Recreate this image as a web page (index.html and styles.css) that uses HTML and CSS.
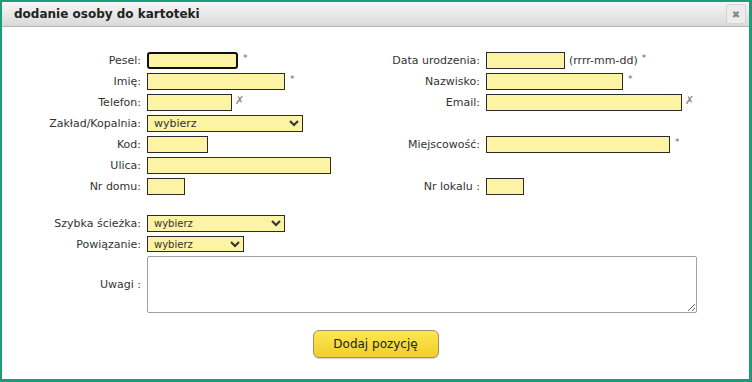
FILE: index.html
```html
<!DOCTYPE html>
<html lang="pl">
<head>
    <meta charset="UTF-8">
    <title>dodanie osoby do kartoteki</title>
    <link rel="stylesheet" href="styles.css">
</head>
<body>
    <div class="frame">
        <div class="dialog">
            <div class="titlebar">
                <span class="title">dodanie osoby do kartoteki</span>
                <span class="close">&#x2716;</span>
            </div>

            <form class="form">
                <div class="grid">
                    <label>Pesel:</label>
                    <div class="field"><input type="text" class="w90 focused"><span class="req">*</span></div>
                    <label>Data urodzenia:</label>
                    <div class="field"><input type="text" class="w79"><span class="hint">(rrrr-mm-dd)</span><span class="req">*</span></div>

                    <label>Imię:</label>
                    <div class="field"><input type="text" class="w138"><span class="req">*</span></div>
                    <label>Nazwisko:</label>
                    <div class="field"><input type="text" class="w137"><span class="req">*</span></div>

                    <label>Telefon:</label>
                    <div class="field"><input type="text" class="w85"><span class="x">&#x2717;</span></div>
                    <label>Email:</label>
                    <div class="field"><input type="text" class="w196"><span class="x">&#x2717;</span></div>

                    <label>Zakład/Kopalnia:</label>
                    <div class="field"><select class="w156"><option>wybierz</option></select></div>
                    <span></span>
                    <span></span>

                    <label>Kod:</label>
                    <div class="field"><input type="text" class="w61"></div>
                    <label>Miejscowość:</label>
                    <div class="field"><input type="text" class="w184"><span class="req">*</span></div>

                    <label>Ulica:</label>
                    <div class="field"><input type="text" class="w184"></div>
                    <span></span>
                    <span></span>

                    <label>Nr domu:</label>
                    <div class="field"><input type="text" class="w38"></div>
                    <label>Nr lokalu :</label>
                    <div class="field"><input type="text" class="w38"></div>
                </div>

                <div class="grid lower">
                    <label>Szybka ścieżka:</label>
                    <div class="field"><select class="w138 small"><option>wybierz</option></select></div>

                    <label>Powiązanie:</label>
                    <div class="field"><select class="w97 small"><option>wybierz</option></select></div>

                    <label>Uwagi :</label>
                    <div class="field tall"><textarea></textarea></div>
                </div>

                <div class="actions">
                    <button type="button">Dodaj pozycję</button>
                </div>
            </form>
        </div>
    </div>
</body>
</html>
```

FILE: styles.css
```css
body {
    margin: 0;
    padding: 0;
    font-family: "DejaVu Sans", Verdana, sans-serif;
    background: #fff;
}

.frame {
    width: 752px;
    height: 382px;
    box-sizing: border-box;
    border: 2px solid #1f9b7a;
    border-right-width: 3px;
    border-bottom-width: 3px;
    overflow: hidden;
}

.dialog {
    height: 100%;
    background: #fff;
}

.titlebar {
    height: 24px;
    display: flex;
    align-items: center;
    justify-content: space-between;
    padding: 0 3px 0 12px;
    background: linear-gradient(#f6f6f6, #dadada);
    border-bottom: 1px solid #b5b5b5;
}

.title {
    font-size: 12px;
    font-weight: bold;
    color: #222;
}

.close {
    width: 18px;
    height: 18px;
    display: flex;
    align-items: center;
    justify-content: center;
    font-size: 10px;
    color: #888;
    background: #ececec;
    border: 1px solid #d4d4d4;
    border-radius: 2px;
}

.form {
    padding-top: 25px;
}

.grid {
    display: grid;
    grid-template-columns: 145px 199px 140px 1fr;
    grid-auto-rows: 17px;
    row-gap: 4px;
    align-items: center;
}

.grid.lower {
    grid-template-columns: 145px 1fr;
    grid-template-rows: 17px 16px 57px;
    margin-top: 20px;
}

label {
    font-size: 11px;
    color: #333;
    text-align: right;
    padding-right: 6px;
    white-space: nowrap;
}

.field {
    display: flex;
    align-items: center;
    height: 17px;
}

.field.tall {
    height: 57px;
}

input[type="text"] {
    height: 17px;
    box-sizing: border-box;
    margin: 0;
    padding: 0 3px;
    background: #fcf3a4;
    border: 1px solid #2b2b2b;
    font-size: 11px;
}

input.focused {
    border: 2px solid #111;
    border-radius: 3px;
}

select {
    height: 17px;
    box-sizing: border-box;
    margin: 0;
    padding: 0 2px;
    background: #fcf3a4;
    border: 1px solid #2b2b2b;
    font-family: "DejaVu Sans", Verdana, sans-serif;
    font-size: 11px;
    color: #333;
}

select.small {
    font-size: 10px;
}

.grid.lower .field:nth-child(4) select {
    height: 16px;
}

textarea {
    width: 550px;
    height: 57px;
    box-sizing: border-box;
    margin: 0;
    border: 1px solid #a0a0a0;
    border-radius: 2px;
}

.w38 { width: 38px; }
.w61 { width: 61px; }
.w79 { width: 79px; }
.w85 { width: 85px; }
.w90 { width: 91px; }
.w97 { width: 97px; }
.w137 { width: 137px; }
.w138 { width: 138px; }
.w156 { width: 156px; }
.w184 { width: 184px; }
.w196 { width: 196px; }

.req {
    font-size: 9px;
    color: #666;
    margin-left: 5px;
    align-self: flex-start;
    margin-top: 1px;
}

.hint {
    font-size: 11px;
    color: #333;
    margin-left: 4px;
}

.hint + .req {
    margin-left: 4px;
}

.x {
    font-size: 11px;
    color: #888;
    margin-left: 3px;
    align-self: flex-start;
}

.actions {
    display: flex;
    justify-content: center;
    padding-top: 17px;
}

button {
    width: 126px;
    height: 28px;
    font-family: "DejaVu Sans", Verdana, sans-serif;
    font-size: 12px;
    color: #222;
    background: linear-gradient(#fde652, #f2cf2a);
    border: 1px solid #9b9272;
    border-radius: 6px;
    box-shadow: 0 1px 1px rgba(0, 0, 0, 0.2);
}
```
